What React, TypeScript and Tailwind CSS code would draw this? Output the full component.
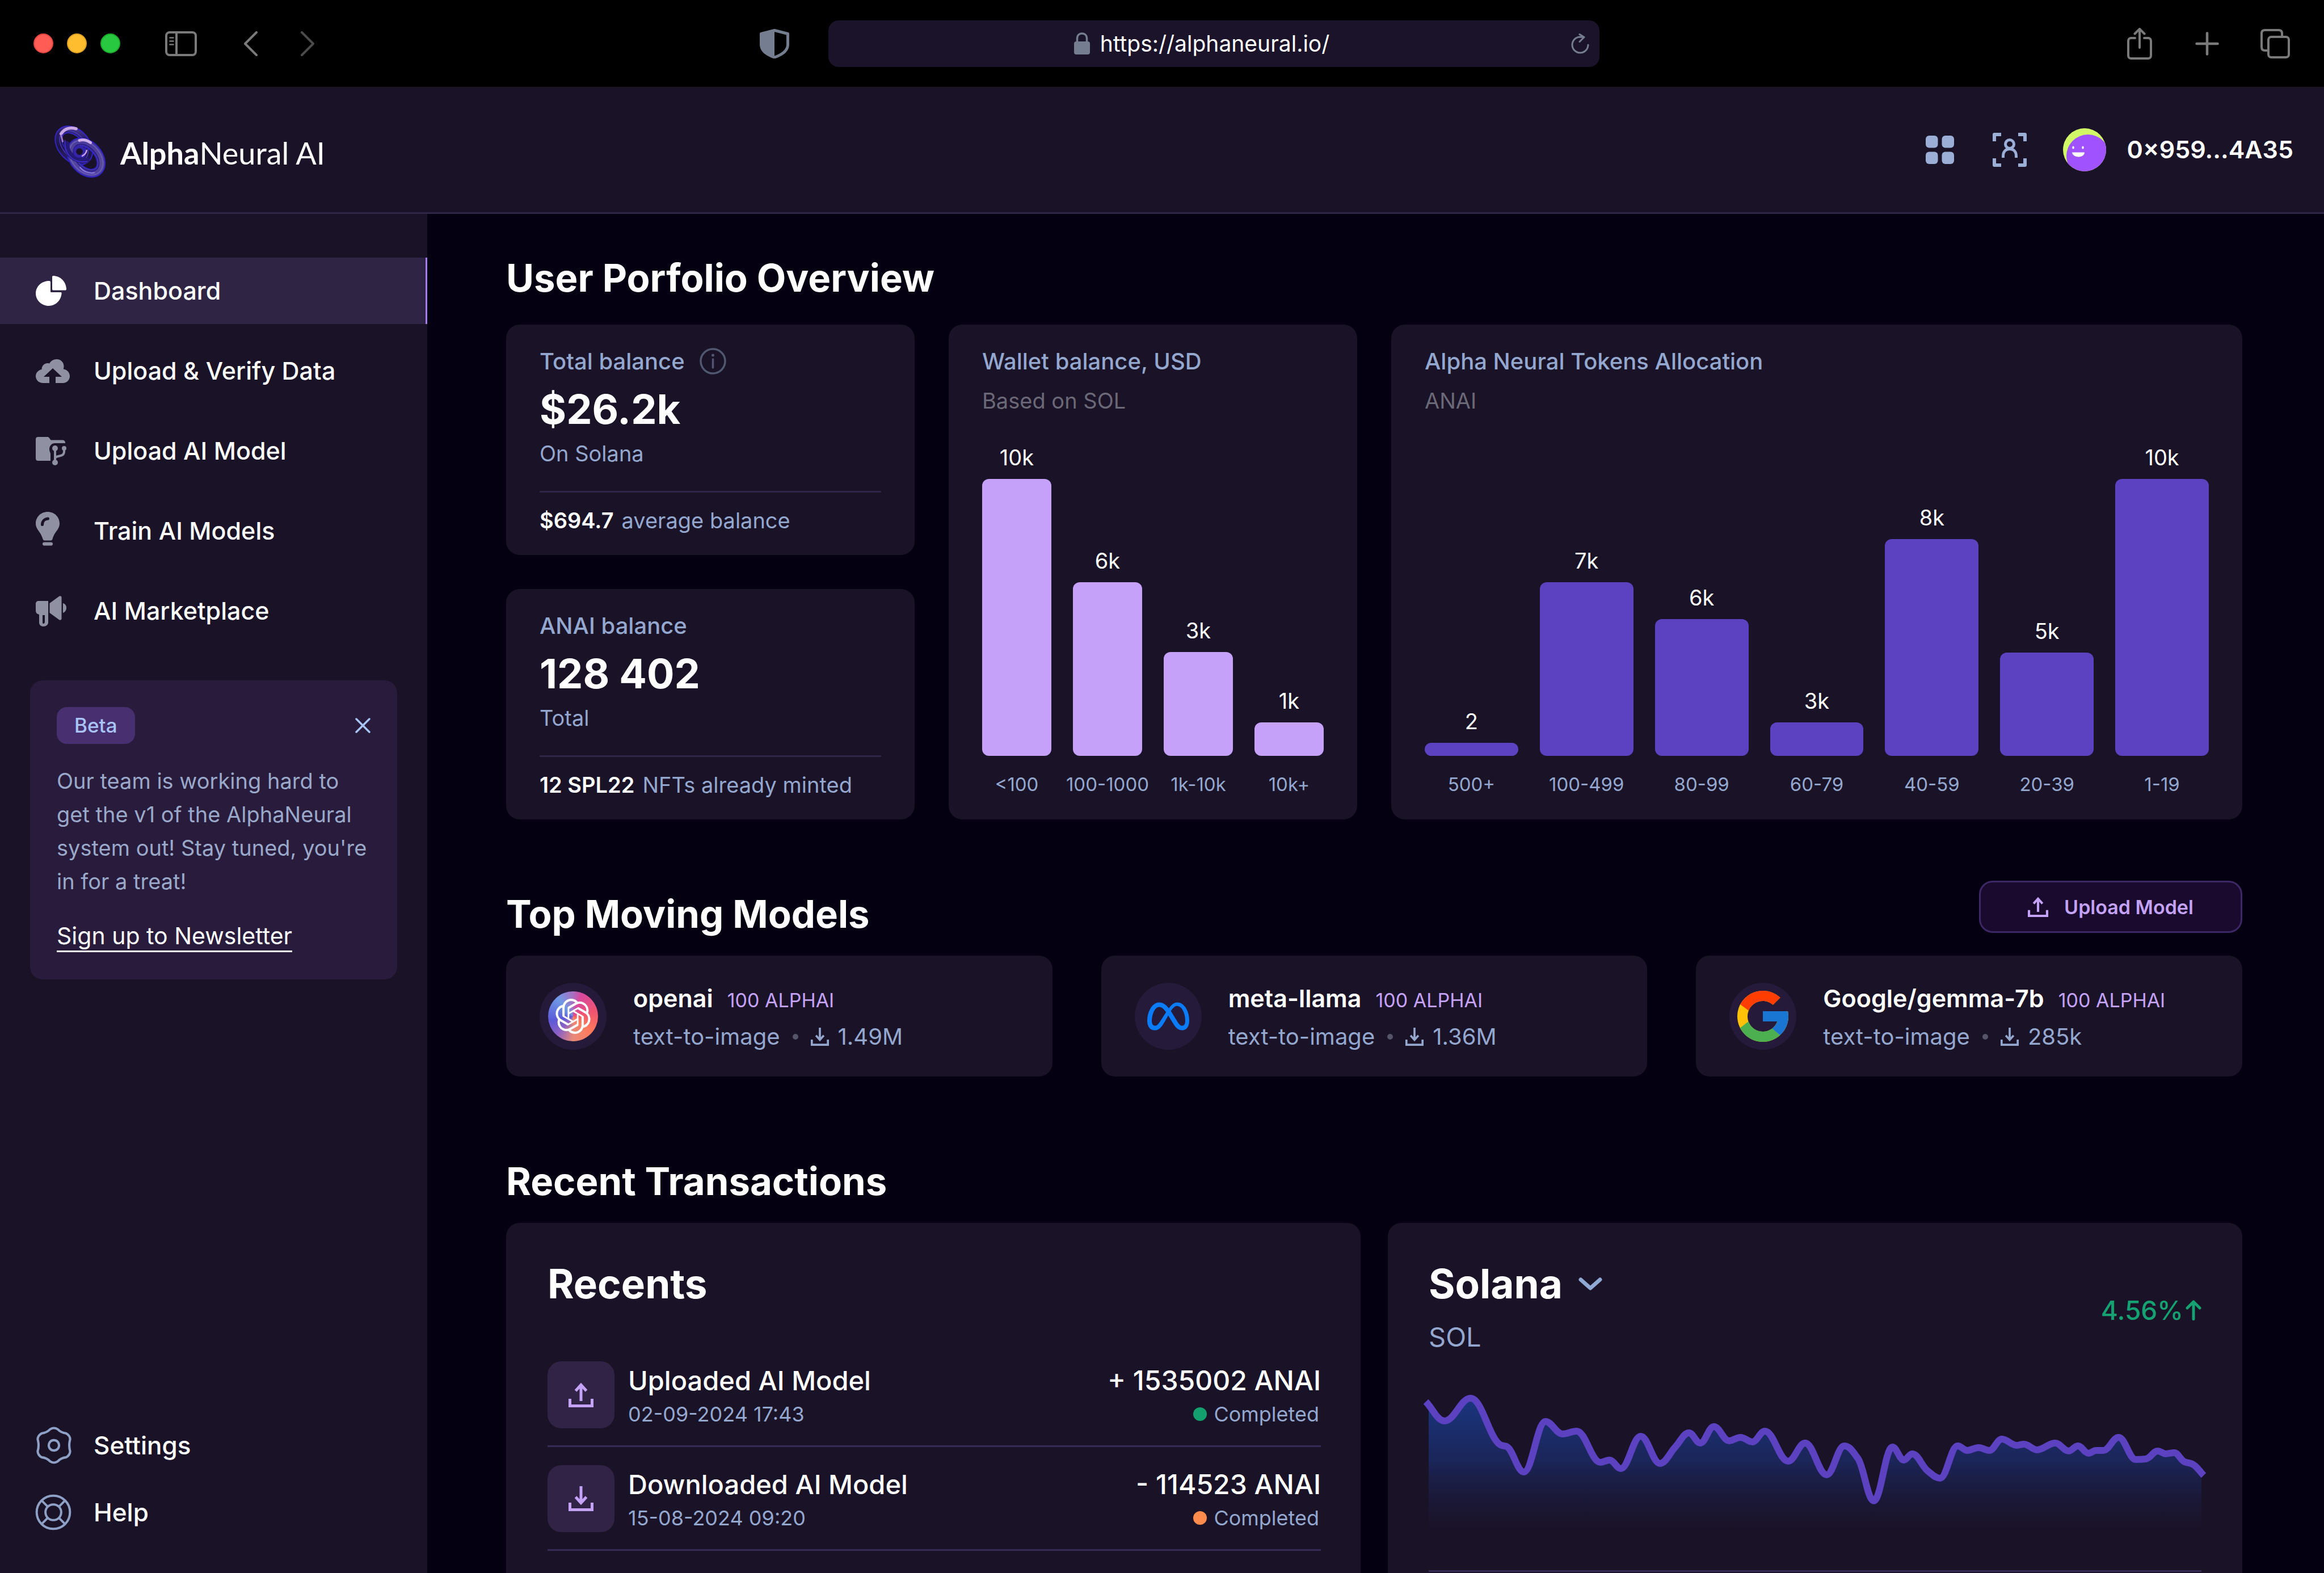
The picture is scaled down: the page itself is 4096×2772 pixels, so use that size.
import React from "react";
import { SiMeta, SiOpenai } from "react-icons/si";
import { FcGoogle } from "react-icons/fc";

/* ---------- icons ---------- */

type IconProps = { className?: string };

const SidebarIcon = ({ className }: IconProps) => (
  <svg viewBox="0 0 56 44" fill="none" stroke="currentColor" className={className}>
    <rect x="2" y="2" width="52" height="40" rx="6" strokeWidth="4" />
    <path d="M20 2v40" strokeWidth="4" />
    <path d="M8.500 11.500h6M8.500 17.500h6M8.500 23.500h6" strokeWidth="2.600" strokeLinecap="round" />
  </svg>
);

const NavChevron = ({ className, flip }: IconProps & { flip?: boolean }) => (
  <svg viewBox="0 0 24 44" fill="none" stroke="currentColor" strokeWidth="4" strokeLinecap="round" strokeLinejoin="round" className={className}>
    <path d={flip ? "M2 2l20 20L2 42" : "M22 2L2 22l20 20"} />
  </svg>
);

const ShieldIcon = ({ className }: IconProps) => (
  <svg viewBox="0 0 54 52" fill="none" className={className}>
    <path d="M27 2.500L50.500 8.500v19c0 10-9 17.500-23.500 22.500C12.500 45 3.500 37.500 3.500 27.500v-19z" stroke="currentColor" strokeWidth="5" strokeLinejoin="round" />
    <path d="M27 1L2 8v20c0 11 10 18 25 23z" fill="currentColor" />
  </svg>
);

const LockIcon = ({ className }: IconProps) => (
  <svg viewBox="0 0 28 39" className={className}>
    <rect y="16" width="28" height="23" rx="4" fill="currentColor" />
    <path d="M5.500 18v-7C5.500 5.500 9 2 14 2s8.500 3.500 8.500 9v7" fill="none" stroke="currentColor" strokeWidth="3.500" />
  </svg>
);

const ReloadIcon = ({ className }: IconProps) => (
  <svg viewBox="0 0 32 36" fill="none" stroke="currentColor" strokeWidth="3" strokeLinecap="round" strokeLinejoin="round" className={className}>
    <path d="M30 20a14 14 0 1 1-14-14l6 .5" />
    <path d="M15 1.500l8 5-8 8" />
  </svg>
);

const ShareIcon = ({ className }: IconProps) => (
  <svg viewBox="0 0 44 56" fill="none" stroke="currentColor" strokeWidth="4" strokeLinecap="round" strokeLinejoin="round" className={className}>
    <path d="M14 18H7c-3 0-5 2-5 5v26c0 3 2 5 5 5h30c3 0 5-2 5-5V23c0-3-2-5-5-5h-7" />
    <path d="M22 35V2M13.500 10.500L22 2l8.500 8.500" />
  </svg>
);

const PlusIcon = ({ className }: IconProps) => (
  <svg viewBox="0 0 42 42" fill="none" stroke="currentColor" strokeWidth="4.500" strokeLinecap="round" className={className}>
    <path d="M21 2.500v37M2.500 21h37" />
  </svg>
);

const TabsIcon = ({ className }: IconProps) => (
  <svg viewBox="0 0 52 52" fill="none" stroke="currentColor" strokeWidth="4" className={className}>
    <rect x="14" y="14" width="36" height="36" rx="5" />
    <path d="M13 38H8c-4 0-6-2-6-6V8c0-4 2-6 6-6h24c4 0 6 2 6 6v5" />
  </svg>
);

const LogoMark = ({ className }: IconProps) => (
  <svg viewBox="0 0 110 110" fill="none" className={className}>
    <defs>
      <linearGradient id="ringA" x1="20" y1="8" x2="66" y2="76" gradientUnits="userSpaceOnUse">
        <stop offset="0" stopColor="#6b52b4" />
        <stop offset=".25" stopColor="#2c2270" />
        <stop offset=".6" stopColor="#1d1548" />
        <stop offset="1" stopColor="#33258c" />
      </linearGradient>
      <linearGradient id="ringB" x1="44" y1="34" x2="88" y2="98" gradientUnits="userSpaceOnUse">
        <stop offset="0" stopColor="#4636a0" />
        <stop offset=".5" stopColor="#574a96" />
        <stop offset="1" stopColor="#4638ac" />
      </linearGradient>
    </defs>
    <g transform="rotate(48 43 41)">
      <ellipse cx="43" cy="41" rx="33" ry="22" stroke="#3324c4" strokeWidth="14" />
      <ellipse cx="43" cy="41" rx="33" ry="22" stroke="url(#ringA)" strokeWidth="10" />
      <ellipse cx="43" cy="41" rx="31" ry="20" stroke="#4a3bb8" strokeWidth="1.500" />
    </g>
    <g transform="rotate(48 65 63)">
      <ellipse cx="65" cy="63" rx="32" ry="22" stroke="#2d1fc0" strokeWidth="16" />
      <ellipse cx="65" cy="63" rx="32" ry="22" stroke="url(#ringB)" strokeWidth="12" />
      <ellipse cx="65" cy="63" rx="28" ry="18" stroke="#2a1c8a" strokeWidth="2" />
      <ellipse cx="65" cy="63" rx="35" ry="25" stroke="#6c60b8" strokeWidth="1.500" />
    </g>
    <path d="M30 38c-1 18 14 32 36 30" stroke="#261a78" strokeWidth="10" strokeLinecap="round" />
    <path d="M27 32c-2 24 14 42 40 38" stroke="#3c2cc0" strokeWidth="2" strokeLinecap="round" />
    <path d="M20 20c6-9 16-12 27-9" stroke="#c9a6e4" strokeWidth="5.500" strokeLinecap="round" />
    <path d="M20 23l3 11" stroke="#9d74cf" strokeWidth="3" strokeLinecap="round" />
    <path d="M53 32c6-2 14 0 20 4" stroke="#cfaeea" strokeWidth="5" strokeLinecap="round" />
    <circle cx="53" cy="52" r="8.500" fill="#1a1226" stroke="#3324a8" strokeWidth="5" />
    <path d="M66 50c-1 5-4 8-8 10" stroke="#cf9fe8" strokeWidth="2.500" strokeLinecap="round" />
    <path d="M54 80c6 8 16 12 26 10" stroke="#8d7ae0" strokeWidth="2" strokeLinecap="round" />
  </svg>
);

const GridIcon = ({ className }: IconProps) => (
  <svg viewBox="0 0 50 50" fill="currentColor" className={className}>
    <rect width="21.500" height="21.500" rx="6" />
    <rect x="28.500" width="21.500" height="21.500" rx="6" />
    <rect y="28.500" width="21.500" height="21.500" rx="6" />
    <rect x="28.500" y="28.500" width="21.500" height="21.500" rx="6" />
  </svg>
);

const ScanUserIcon = ({ className }: IconProps) => (
  <svg viewBox="0 0 60 60" fill="none" stroke="currentColor" strokeWidth="6" className={className}>
    <path d="M3 15V3h12M45 3h12v12M57 45v12H45M15 57H3V45" strokeLinejoin="round" />
    <circle cx="30" cy="20" r="7.500" strokeWidth="5" />
    <path d="M18.500 44v-3c0-7 4-12.500 11.500-12.500S41.500 34 41.500 41v3" strokeWidth="5" />
  </svg>
);

const Avatar = ({ className }: IconProps) => (
  <svg viewBox="0 0 76 76" className={className}>
    <defs>
      <clipPath id="avatarClip">
        <circle cx="38" cy="38" r="38" />
      </clipPath>
    </defs>
    <g clipPath="url(#avatarClip)">
      <rect width="76" height="76" fill="#d0f867" />
      <circle cx="44" cy="49" r="38" fill="#a052ff" />
    </g>
    <ellipse cx="18" cy="34" rx="1.800" ry="2.500" fill="#fff" />
    <ellipse cx="35" cy="34" rx="1.800" ry="2.500" fill="#fff" />
    <path d="M16 42.500h22c0 4-4 8-10.500 8S16 46.500 16 42.500z" fill="#fff" />
  </svg>
);

const PieIcon = ({ className }: IconProps) => (
  <svg viewBox="0 0 54 54" fill="currentColor" className={className}>
    <path d="M26 11v16.500c0 1 .6 1.500 1.500 1.500H44c1 0 1.700.7 1.600 1.800C44.800 43.500 35 53 23 53 10.300 53 0 43 0 31 0 18.800 10 9.300 23.500 9c1.400 0 2.500.8 2.500 2z" />
    <path d="M29 2c0-1.300 1-2.100 2.300-2C43.500.6 53.300 10 54 23c.1 1.700-.8 2.500-2 2.500H31c-1.300 0-2-.8-2-2z" />
  </svg>
);

const CloudUploadIcon = ({ className }: IconProps) => (
  <svg viewBox="0 0 60 42" fill="currentColor" className={className}>
    <path d="M24 42H13C5.500 42 0 36.500 0 30c0-6 4.500-11 10.500-12C10.500 11 16 6.500 22 7c.8.1 1.500.4 2 .7C26.500 3 31.500 0 37 0c7 0 12.500 5.500 12.500 12.500 0 1.500-.3 3.500-.7 5C55 18 60 23.500 60 30c0 6.500-5.500 12-12 12H35V31h11L30 16 14 31h10z" />
  </svg>
);

const FolderGitIcon = ({ className }: IconProps) => (
  <svg viewBox="0 0 54 50" className={className}>
    <path d="M4 0h16c2 0 3 .5 4 2l2.500 3.500H47c3 0 5 2 5 4.500v1H34c-6 0-10 5-10 10.500 0 4 1.500 5.500 2 8V42H4c-2.500 0-4-1.500-4-4V4c0-2.500 1.500-4 4-4z" fill="currentColor" />
    <g stroke="currentColor" strokeWidth="4" fill="none">
      <path d="M34 20v24M50 20v6c0 4-2 6-6 7l-6 1.500c-2.500.7-4 1.500-4 4" />
    </g>
    <circle cx="34" cy="20" r="5" fill="currentColor" />
    <circle cx="50" cy="20" r="4" fill="currentColor" />
    <circle cx="34" cy="45" r="5" fill="currentColor" />
  </svg>
);

const BulbIcon = ({ className }: IconProps) => (
  <svg viewBox="0 0 42 60" fill="currentColor" className={className}>
    <path d="M21 0C9 0 0 9 0 20.500c0 11 9 14 12.500 27.500.4 1.500 1.500 2.500 3 2.500h11c1.500 0 2.600-1 3-2.500C33 34.500 42 31.500 42 20.500 42 9 33 0 21 0z" />
    <path d="M11.500 22.500c0-6 4-10 10-10.500" fill="none" stroke="#1a1226" strokeWidth="5" strokeLinecap="round" />
    <rect x="12" y="53.500" width="18" height="6" rx="3" />
  </svg>
);

const MegaphoneIcon = ({ className }: IconProps) => (
  <svg viewBox="0 0 54 54" fill="currentColor" className={className}>
    <path d="M22 9H5C2 9 0 11 0 14v12c0 4 2.500 6 6 7v14c0 4 3 7 7.500 7S22 51 22 47zM16 46c0 2-1 3-2.500 3S12 48 12 46V34h4z" fillRule="evenodd" />
    <path d="M24.500 13L41 1c2-1.500 4.500-.5 4.500 2v37c0 2.500-2.500 3.500-4.500 2L24.500 30z" />
    <path d="M48 13c8 2 8 14 0 17z" />
  </svg>
);

const CloseIcon = ({ className }: IconProps) => (
  <svg viewBox="0 0 27 27" fill="none" stroke="currentColor" strokeWidth="3.500" strokeLinecap="round" className={className}>
    <path d="M2 2l23 23M25 2L2 25" />
  </svg>
);

const GearIcon = ({ className }: IconProps) => (
  <svg viewBox="0 0 24 24" fill="none" stroke="currentColor" strokeWidth="1.500" strokeLinejoin="round" className={className}>
    <path d="M9.700 1.600Q12 .2 14.300 1.600Q16.600 4 19.800 4.300Q22.300 5.600 22.400 8.200Q21.300 12 22.400 15.800Q22.300 18.400 19.800 19.700Q16.600 20 14.300 22.400Q12 23.800 9.700 22.400Q7.400 20 4.200 19.700Q1.700 18.400 1.600 15.800Q2.700 12 1.600 8.200Q1.700 5.600 4.200 4.300Q7.400 4 9.700 1.600Z" />
    <circle cx="12" cy="12" r="3.300" />
  </svg>
);

const HelpIcon = ({ className }: IconProps) => (
  <svg viewBox="0 0 24 24" fill="none" stroke="currentColor" strokeWidth="1.500" className={className}>
    <circle cx="12" cy="12" r="11" />
    <circle cx="12" cy="12" r="5.200" />
    <path d="M4.200 4.200l4.100 4.100M19.800 4.200l-4.100 4.100M19.800 19.800l-4.100-4.100M4.200 19.800l4.100-4.100" />
  </svg>
);

const InfoIcon = ({ className }: IconProps) => (
  <svg viewBox="0 0 47 47" fill="none" stroke="currentColor" className={className}>
    <circle cx="23.500" cy="23.500" r="21.500" strokeWidth="3.500" />
    <path d="M23.500 20v15" strokeWidth="3.500" strokeLinecap="round" />
    <circle cx="23.500" cy="13" r="2.500" fill="currentColor" stroke="none" />
  </svg>
);

const UploadIcon = ({ className }: IconProps) => (
  <svg viewBox="0 0 44 44" fill="none" stroke="currentColor" strokeWidth="5" className={className}>
    <path d="M2.500 29v12.500h39V29" />
    <path d="M22 33V5M12.500 15L22 4.500 31.500 15" />
  </svg>
);

const DownloadIcon = ({ className }: IconProps) => (
  <svg viewBox="0 0 44 44" fill="none" stroke="currentColor" strokeWidth="5" className={className}>
    <path d="M2.500 29v12.500h39V29" />
    <path d="M22 0v29M12.500 19L22 29.500 31.500 19" />
  </svg>
);

const CaretDown = ({ className }: IconProps) => (
  <svg viewBox="0 0 42 23" fill="none" stroke="currentColor" strokeWidth="7" strokeLinecap="round" strokeLinejoin="round" className={className}>
    <path d="M4 4l17 15L38 4" />
  </svg>
);

const ArrowUp = ({ className }: IconProps) => (
  <svg viewBox="0 0 28 36" fill="none" stroke="currentColor" strokeWidth="5" strokeLinecap="round" strokeLinejoin="round" className={className}>
    <path d="M14 33.500V3M3 14L14 3l11 11" />
  </svg>
);

/* ---------- data ---------- */

const navItems = [
  { label: "Dashboard", Icon: PieIcon, size: "w-[54px]", active: true },
  { label: "Upload & Verify Data", Icon: CloudUploadIcon, size: "w-[60px]" },
  { label: "Upload AI Model", Icon: FolderGitIcon, size: "w-[54px]" },
  { label: "Train AI Models", Icon: BulbIcon, size: "w-[42px] mb-2" },
  { label: "AI Marketplace", Icon: MegaphoneIcon, size: "w-[54px]" },
];

type Bar = { value: string; label: string; height: number };

const walletBars: Bar[] = [
  { value: "10k", label: "<100", height: 488 },
  { value: "6k", label: "100-1000", height: 306 },
  { value: "3k", label: "1k-10k", height: 183 },
  { value: "1k", label: "10k+", height: 59 },
];

const tokenBars: Bar[] = [
  { value: "2", label: "500+", height: 23 },
  { value: "7k", label: "100-499", height: 306 },
  { value: "6k", label: "80-99", height: 241 },
  { value: "3k", label: "60-79", height: 59 },
  { value: "8k", label: "40-59", height: 382 },
  { value: "5k", label: "20-39", height: 182 },
  { value: "10k", label: "1-19", height: 488 },
];

const transactions = [
  { title: "Uploaded AI Model", date: "02-09-2024 17:43", amount: "+ 1535002 ANAI", dot: "bg-[#149f6e]", Icon: UploadIcon },
  { title: "Downloaded AI Model", date: "15-08-2024 09:20", amount: "- 114523 ANAI", dot: "bg-[#ff8c4c]", Icon: DownloadIcon },
];

const pricePoints: [number, number][] = [
  [-5, 17], [28, 51], [74, 11], [128, 94], [137, 96], [168, 141], [206, 52], [236, 74], [261, 69], [303, 124],
  [319, 120], [339, 135], [374, 78], [408, 126], [435, 97], [459, 72], [479, 90], [503, 61], [530, 86], [550, 80],
  [571, 88], [593, 69], [634, 122], [664, 90], [702, 146], [733, 95], [757, 117], [785, 192], [818, 97], [838, 120],
  [853, 109], [880, 139], [902, 152], [933, 95], [950, 103], [970, 98], [989, 103], [1011, 83], [1037, 94], [1050, 92],
  [1073, 102], [1105, 90], [1129, 104], [1145, 95], [1164, 108], [1177, 103], [1190, 103], [1217, 80], [1247, 119],
  [1265, 118], [1286, 104], [1300, 109], [1315, 107], [1333, 123], [1347, 127], [1367, 147],
];

/* Smooth curve through the points that stays flat at each peak and valley. */
function smoothPath(points: [number, number][]) {
  const slope = points.map((p, i) => {
    if (i === 0) return (points[1][1] - p[1]) / (points[1][0] - p[0]);
    if (i === points.length - 1) return (p[1] - points[i - 1][1]) / (p[0] - points[i - 1][0]);
    const a = (p[1] - points[i - 1][1]) / (p[0] - points[i - 1][0]);
    const b = (points[i + 1][1] - p[1]) / (points[i + 1][0] - p[0]);
    if (a * b <= 0) return 0;
    return (2 * a * b) / (a + b);
  });
  let d = `M${points[0][0]} ${points[0][1]}`;
  for (let i = 1; i < points.length; i++) {
    const [x0, y0] = points[i - 1];
    const [x1, y1] = points[i];
    const h = (x1 - x0) / 2.6;
    d += `C${x0 + h} ${y0 + slope[i - 1] * h} ${x1 - h} ${y1 - slope[i] * h} ${x1} ${y1}`;
  }
  return d;
}

/* ---------- parts ---------- */

function BrowserBar() {
  return (
    <div className="flex h-[153px] shrink-0 items-center justify-between bg-black pl-[59px] pr-[60px] text-[#7a7a7a]">
      <div className="flex w-[1280px] items-center">
        <div className="flex gap-[24px]">
          <span className="size-[35px] rounded-full border-2 border-[#e0443e] bg-[#ff5c56]" />
          <span className="size-[35px] rounded-full border-2 border-[#dea123] bg-[#febd2e]" />
          <span className="size-[35px] rounded-full border-2 border-[#1aab29] bg-[#28c941]" />
        </div>
        <button aria-label="Toggle sidebar" className="ml-[79px]">
          <SidebarIcon className="w-[56px]" />
        </button>
        <button aria-label="Back" className="ml-[83px]">
          <NavChevron className="w-[24px]" />
        </button>
        <button aria-label="Forward" className="ml-[76px] text-[#4a4a4a]">
          <NavChevron className="w-[24px]" flip />
        </button>
      </div>
      <div className="flex items-center gap-[68px]">
        <ShieldIcon className="w-[54px] text-[#757e90]" />
        <div className="flex h-[82px] w-[1359px] items-center rounded-[18px] bg-[#1b132a] px-[18px]">
          <div className="flex flex-1 items-center justify-center gap-[18px] pr-[12px]">
            <LockIcon className="w-[28px] text-[#757e90]" />
            <span className="text-[39px] leading-none text-white">https://alphaneural.io/</span>
          </div>
          <button aria-label="Reload">
            <ReloadIcon className="w-[32px] text-[#757e90]" />
          </button>
        </div>
      </div>
      <div className="flex w-[1217px] items-center justify-end">
        <button aria-label="Share">
          <ShareIcon className="w-[44px]" />
        </button>
        <button aria-label="New tab" className="ml-[76px]">
          <PlusIcon className="w-[42px]" />
        </button>
        <button aria-label="Show tabs" className="ml-[73px]">
          <TabsIcon className="w-[52px]" />
        </button>
      </div>
    </div>
  );
}

function Header() {
  return (
    <header className="flex h-[224px] shrink-0 items-center justify-between border-b-3 border-[#2f2547] bg-[#1a1226] pl-[88px] pr-[54px]">
      <a href="#home" className="flex items-center gap-[16px] pt-3">
        <LogoMark className="w-[108px]" />
        <span className="font-['Lato'] text-[54px] leading-none text-white">
          <b className="font-bold">Alpha</b>Neural AI
        </span>
      </a>
      <div className="flex items-center text-[#9aaed6]">
        <button aria-label="Apps">
          <GridIcon className="w-[50px]" />
        </button>
        <button aria-label="Scan" className="ml-[68px]">
          <ScanUserIcon className="w-[60px]" />
        </button>
        <button className="ml-[64px] flex items-center gap-[36px] text-[43px] font-semibold text-white">
          <Avatar className="w-[76px]" />
          0×959...4A35
        </button>
      </div>
    </header>
  );
}

function Sidebar() {
  return (
    <aside className="flex w-[753px] shrink-0 flex-col bg-[#1a1226] pb-[48px] pt-[77px] font-medium text-white">
      <nav className="flex flex-col gap-6 text-[43px]">
        {navItems.map(({ label, Icon, size, active }) => (
          <a
            key={label}
            href="#nav"
            className={
              active
                ? "flex h-[117px] items-center border-r-3 border-[#a67cf0] bg-[#2f2444] pl-[63px]"
                : "flex h-[117px] items-center pl-[63px] text-white"
            }
          >
            <span className={active ? "w-[102px] text-white" : "w-[102px] text-[#8f90a1]"}>
              <Icon className={size} />
            </span>
            {label}
          </a>
        ))}
      </nav>
      <section className="mx-[53px] mt-[64px] rounded-[22px] bg-[#281b3b] px-[47px] pb-[48px] pt-[47px]">
        <div className="flex items-center justify-between">
          <span className="rounded-[18px] bg-[#483070] px-[31px] text-[35px] font-medium leading-[65px] text-[#a9c5f7]">Beta</span>
          <button aria-label="Dismiss" className="text-[#a9c5f7]">
            <CloseIcon className="w-[27px]" />
          </button>
        </div>
        <p className="mt-[36px] whitespace-nowrap text-[38px] font-normal leading-[59px] text-[#9aa8c9]">
          Our team is working hard to
          <br />
          get the v1 of the AlphaNeural
          <br />
          system out! Stay tuned, you're
          <br />
          in for a treat!
        </p>
        <a href="#newsletter" className="mt-[40px] inline-block border-b-3 border-white text-[41px] font-normal leading-[52px]">
          Sign up to Newsletter
        </a>
      </section>
      <div className="mt-auto text-[44px]">
        <a href="#settings" className="flex h-[118px] items-center pl-[62px]">
          <span className="w-[103px] text-[#8fa0c6]">
            <GearIcon className="w-[66px]" />
          </span>
          Settings
        </a>
        <a href="#help" className="flex h-[118px] items-center pl-[62px]">
          <span className="w-[103px] text-[#8fa0c6]">
            <HelpIcon className="w-[64px]" />
          </span>
          Help
        </a>
      </div>
    </aside>
  );
}

function BalanceCard(props: { title: string; info?: boolean; value: string; note: string; strong: string; rest: string }) {
  return (
    <section className="rounded-[24px] bg-[#1a1226] px-[59px] pb-[31px] pt-[41px]">
      <h3 className="flex items-center gap-[26px] text-[40px] font-medium leading-[47px] text-[#94a7cf]">
        {props.title}
        {props.info && <InfoIcon className="w-[47px] text-[#4f5870]" />}
      </h3>
      <p className="mt-[20px] text-[72px] font-bold leading-[82px] text-white">{props.value}</p>
      <p className="mt-[8px] text-[38px] leading-[59px] text-[#94a7cf]">{props.note}</p>
      <p className="mt-[36px] border-t-3 border-[#2f2547] pt-[20px] text-[38px] leading-[59px] text-[#94a7cf]">
        <b className="mr-[14px] font-semibold text-white">{props.strong}</b>
        {props.rest}
      </p>
    </section>
  );
}

function BarCard({ title, note, bars, color }: { title: string; note: string; bars: Bar[]; color: string }) {
  return (
    <section className="flex flex-col rounded-[24px] bg-[#1a1226] px-[59px] pb-[38px] pt-[41px]">
      <h3 className="text-[40px] font-medium leading-[47px] text-[#94a7cf]">{title}</h3>
      <p className="mt-[17px] text-[38px] leading-[59px] text-[#6b6878]">{note}</p>
      <div className="mt-auto flex items-end gap-[38px]">
        {bars.map((bar) => (
          <div key={bar.label} className="flex min-w-0 flex-1 flex-col items-center">
            <span className="mb-[14px] text-[38px] leading-[48px] text-white">{bar.value}</span>
            <div className={color} style={{ height: bar.height }} />
            <span className="mt-[26px] whitespace-nowrap text-[33px] leading-[48px] text-[#94a7cf]">{bar.label}</span>
          </div>
        ))}
      </div>
    </section>
  );
}

function ModelCard({ name, downloads, logo }: { name: string; downloads: string; logo: React.ReactNode }) {
  return (
    <article className="flex h-[213px] items-center gap-[47px] rounded-[24px] bg-[#1a1226] px-[59px]">
      <span className="flex size-[118px] shrink-0 items-center justify-center rounded-full bg-[#251a3a]">{logo}</span>
      <div className="pt-1">
        <h3 className="flex items-baseline gap-[25px] text-[43px] font-semibold leading-[60px] text-white">
          {name}
          <span className="text-[34px] font-normal text-[#c4a2f8]">100 ALPHAI</span>
        </h3>
        <p className="mt-1 flex items-center text-[40px] leading-[60px] text-[#94a7cf]">
          text-to-image
          <span className="mx-[22px] size-[10px] rounded-full bg-[#55556a]" />
          <DownloadIcon className="mr-[16px] w-[32px]" />
          {downloads}
        </p>
      </div>
    </article>
  );
}

function RecentsCard() {
  return (
    <section className="rounded-t-[24px] bg-[#1a1226] pl-[73px] pr-[70px] pt-[65px]">
      <h3 className="text-[71px] font-bold leading-[84px] text-white">Recents</h3>
      <ul className="mt-[63px]">
        {transactions.map(({ title, date, amount, dot, Icon }) => (
          <li key={title} className="flex items-center border-b-3 border-[#372a54] pb-[30px] pt-[32px]">
            <span className="flex size-[118px] items-center justify-center rounded-[24px] bg-[#302345] text-[#c4a2f8]">
              <Icon className="w-[44px]" />
            </span>
            <div className="ml-[24px] pt-2">
              <p className="text-[47px] font-medium leading-[52px] text-white">{title}</p>
              <p className="mt-2 text-[36px] leading-[50px] text-[#94a7cf]">{date}</p>
            </div>
            <div className="ml-auto pt-2 text-right">
              <p className="text-[48px] font-medium leading-[52px] text-white">{amount}</p>
              <p className="mt-2 flex items-center justify-end gap-[12px] pr-[3px] text-[36px] leading-[50px] text-[#94a7cf]">
                <span className={`size-[24px] rounded-full ${dot}`} />
                Completed
              </p>
            </div>
          </li>
        ))}
      </ul>
    </section>
  );
}

function SolanaCard() {
  const line = smoothPath(pricePoints);
  return (
    <section className="rounded-t-[24px] bg-[#1a1226] px-[72px] pt-[65px]">
      <div className="flex items-center justify-between">
        <div>
          <button className="flex items-center gap-[28px] text-[71px] font-bold leading-[84px] text-white">
            Solana
            <CaretDown className="w-[42px] text-[#8fa9d4]" />
          </button>
          <p className="mt-[23px] text-[47px] leading-[58px] text-[#94a7cf]">SOL</p>
        </div>
        <span className="flex items-center pt-3 text-[46px] font-medium leading-[58px] text-[#15a171]">
          4.56%
          <ArrowUp className="ml-[4px] w-[28px]" />
        </span>
      </div>
      <svg viewBox="0 0 1363 251" className="mt-[68px] block w-full overflow-visible" fill="none">
        <defs>
          <linearGradient id="priceFill" x1="0" y1="0" x2="0" y2="1">
            <stop offset="0" stopColor="#19367f" />
            <stop offset=".45" stopColor="#1b2860" stopOpacity=".9" />
            <stop offset="1" stopColor="#1a1b40" stopOpacity="0" />
          </linearGradient>
          <clipPath id="priceClip">
            <rect width="1363" height="251" />
          </clipPath>
        </defs>
        <path d={`${line}V251H-5Z`} fill="url(#priceFill)" clipPath="url(#priceClip)" />
        <path d={line} stroke="#5c41c0" strokeWidth="12" strokeLinejoin="round" />
      </svg>
      <hr className="mt-[63px] border-t-3 border-[#372a54]" />
    </section>
  );
}

/* ---------- page ---------- */

export default function App() {
  return (
    <div className="flex h-screen flex-col overflow-hidden bg-[#050011] font-['Inter',sans-serif]">
      <BrowserBar />
      <Header />
      <div className="flex min-h-0 flex-1">
        <Sidebar />
        <main className="min-w-0 flex-1 pl-[139px] pr-[144px] pt-[73px]">
          <h2 className="text-[67px] font-bold leading-[80px] text-white">User Porfolio Overview</h2>
          <div className="mt-[42px] grid grid-cols-[12fr_12fr_25fr] gap-[60px]">
            <div className="flex flex-col gap-[60px]">
              <BalanceCard title="Total balance" info value="$26.2k" note="On Solana" strong="$694.7" rest="average balance" />
              <BalanceCard title="ANAI balance" value="128 402" note="Total" strong="12 SPL22" rest="NFTs already minted" />
            </div>
            <BarCard title="Wallet balance, USD" note="Based on SOL" bars={walletBars} color="w-full rounded-[12px] bg-[#c5a1fa]" />
            <BarCard title="Alpha Neural Tokens Allocation" note="ANAI" bars={tokenBars} color="w-full rounded-[12px] bg-[#5c41c0]" />
          </div>

          <div className="mt-[108px] flex items-start justify-between">
            <h2 className="mt-[19px] text-[67px] font-bold leading-[80px] text-white">Top Moving Models</h2>
            <button className="flex h-[92px] w-[464px] items-center justify-center gap-[28px] rounded-[24px] border-3 border-[#3d2766] bg-[#1a0a2e] text-[34px] font-semibold text-[#c4a2f8]">
              <UploadIcon className="w-[36px]" />
              Upload Model
            </button>
          </div>
          <div className="mt-[33px] grid grid-cols-3 gap-[86px]">
            <ModelCard
              name="openai"
              downloads="1.49M"
              logo={
                <span className="flex size-[88px] items-center justify-center rounded-full bg-[conic-gradient(from_20deg,#d8489e,#f0566e_60deg,#ff7a5c_110deg,#e88a78_160deg,#8f62c4_200deg,#5c5ad8_240deg,#6f9ae6_300deg,#a86fc0_340deg,#d8489e)]">
                  <SiOpenai className="size-[62px] text-white" />
                </span>
              }
            />
            <ModelCard name="meta-llama" downloads="1.36M" logo={<SiMeta className="size-[74px] text-[#0a7cf8]" />} />
            <ModelCard name="Google/gemma-7b" downloads="285k" logo={<FcGoogle className="size-[108px]" />} />
          </div>

          <h2 className="mt-[145px] text-[67px] font-bold leading-[80px] text-white">Recent Transactions</h2>
          <div className="mt-[33px] grid h-[800px] grid-cols-2 gap-[48px]">
            <RecentsCard />
            <SolanaCard />
          </div>
        </main>
      </div>
    </div>
  );
}
